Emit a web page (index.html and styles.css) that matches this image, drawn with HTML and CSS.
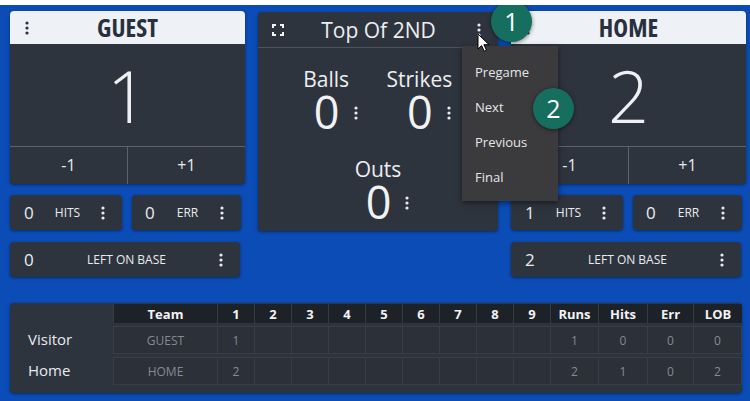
FILE: index.html
```html
<!DOCTYPE html>
<html>
<head>
<meta charset="utf-8">
<link rel="stylesheet" href="styles.css">
</head>
<body>
<div class="screen">
  <div class="top">
    <div class="side">
      <div class="card score-card">
        <div class="team-head">
          <svg class="kebab dark" viewBox="0 0 4 14"><circle cx="2" cy="2" r="1.6"/><circle cx="2" cy="7" r="1.6"/><circle cx="2" cy="12" r="1.6"/></svg>
          <span class="team-name">GUEST</span>
        </div>
        <div class="score">1</div>
        <div class="adjust"><div class="adj">-1</div><div class="adj">+1</div></div>
      </div>
      <div class="stats">
        <div class="card stat hits"><span class="num">0</span><span class="lbl">HITS</span><svg class="kebab" viewBox="0 0 4 14"><circle cx="2" cy="2" r="1.6"/><circle cx="2" cy="7" r="1.6"/><circle cx="2" cy="12" r="1.6"/></svg></div>
        <div class="card stat err"><span class="num">0</span><span class="lbl">ERR</span><svg class="kebab" viewBox="0 0 4 14"><circle cx="2" cy="2" r="1.6"/><circle cx="2" cy="7" r="1.6"/><circle cx="2" cy="12" r="1.6"/></svg></div>
      </div>
      <div class="card stat lob"><span class="num">0</span><span class="lbl">LEFT ON BASE</span><svg class="kebab" viewBox="0 0 4 14"><circle cx="2" cy="2" r="1.6"/><circle cx="2" cy="7" r="1.6"/><circle cx="2" cy="12" r="1.6"/></svg></div>
    </div>

    <div class="center">
      <div class="card game-card">
        <div class="game-head">
          <svg class="fs" viewBox="0 0 12 12"><path d="M1 4V1h3M8 1h3v3M11 8v3H8M4 11H1V8" fill="none" stroke="#f2f3f5" stroke-width="2"/></svg>
          <span class="inning">Top Of 2ND</span>
          <svg class="kebab" viewBox="0 0 4 14"><circle cx="2" cy="2" r="1.6"/><circle cx="2" cy="7" r="1.6"/><circle cx="2" cy="12" r="1.6"/></svg>
        </div>
        <div class="counts">
          <div class="count">
            <div class="count-lbl">Balls</div>
            <div class="count-row"><span class="count-num">0</span><svg class="kebab" viewBox="0 0 4 14"><circle cx="2" cy="2" r="1.6"/><circle cx="2" cy="7" r="1.6"/><circle cx="2" cy="12" r="1.6"/></svg></div>
          </div>
          <div class="count">
            <div class="count-lbl">Strikes</div>
            <div class="count-row"><span class="count-num">0</span><svg class="kebab" viewBox="0 0 4 14"><circle cx="2" cy="2" r="1.6"/><circle cx="2" cy="7" r="1.6"/><circle cx="2" cy="12" r="1.6"/></svg></div>
          </div>
        </div>
        <div class="counts outs">
          <div class="count">
            <div class="count-lbl">Outs</div>
            <div class="count-row"><span class="count-num">0</span><svg class="kebab" viewBox="0 0 4 14"><circle cx="2" cy="2" r="1.6"/><circle cx="2" cy="7" r="1.6"/><circle cx="2" cy="12" r="1.6"/></svg></div>
          </div>
        </div>
      </div>
      <div class="menu">
        <div class="menu-item">Pregame</div>
        <div class="menu-item">Next</div>
        <div class="menu-item">Previous</div>
        <div class="menu-item">Final</div>
      </div>
      <svg class="cursor" viewBox="0 0 12 19"><path d="M1 1v15l3.6-3.4 2.6 5.6 2.3-1-2.6-5.5H12z" fill="#fff" stroke="#000" stroke-width="1"/></svg>
      <div class="badge b1">1</div>
      <div class="badge b2">2</div>
    </div>

    <div class="side">
      <div class="card score-card">
        <div class="team-head">
          <svg class="kebab dark" viewBox="0 0 4 14"><circle cx="2" cy="2" r="1.6"/><circle cx="2" cy="7" r="1.6"/><circle cx="2" cy="12" r="1.6"/></svg>
          <span class="team-name">HOME</span>
        </div>
        <div class="score">2</div>
        <div class="adjust"><div class="adj">-1</div><div class="adj">+1</div></div>
      </div>
      <div class="stats">
        <div class="card stat hits"><span class="num">1</span><span class="lbl">HITS</span><svg class="kebab" viewBox="0 0 4 14"><circle cx="2" cy="2" r="1.6"/><circle cx="2" cy="7" r="1.6"/><circle cx="2" cy="12" r="1.6"/></svg></div>
        <div class="card stat err"><span class="num">0</span><span class="lbl">ERR</span><svg class="kebab" viewBox="0 0 4 14"><circle cx="2" cy="2" r="1.6"/><circle cx="2" cy="7" r="1.6"/><circle cx="2" cy="12" r="1.6"/></svg></div>
      </div>
      <div class="card stat lob"><span class="num">2</span><span class="lbl">LEFT ON BASE</span><svg class="kebab" viewBox="0 0 4 14"><circle cx="2" cy="2" r="1.6"/><circle cx="2" cy="7" r="1.6"/><circle cx="2" cy="12" r="1.6"/></svg></div>
    </div>
  </div>

  <div class="card box-card">
    <table class="box">
      <colgroup>
        <col class="c-label"><col class="c-team">
        <col class="c-inn"><col class="c-inn"><col class="c-inn"><col class="c-inn"><col class="c-inn"><col class="c-inn"><col class="c-inn"><col class="c-inn"><col class="c-inn">
        <col class="c-runs"><col class="c-hits"><col class="c-err"><col class="c-lob">
      </colgroup>
      <thead>
        <tr><th class="blank"></th><th>Team</th><th>1</th><th>2</th><th>3</th><th>4</th><th>5</th><th>6</th><th>7</th><th>8</th><th>9</th><th>Runs</th><th>Hits</th><th>Err</th><th>LOB</th></tr>
      </thead>
      <tbody>
        <tr><td class="rlabel">Visitor</td><td>GUEST</td><td>1</td><td></td><td></td><td></td><td></td><td></td><td></td><td></td><td></td><td>1</td><td>0</td><td>0</td><td>0</td></tr>
        <tr><td class="rlabel">Home</td><td>HOME</td><td>2</td><td></td><td></td><td></td><td></td><td></td><td></td><td></td><td></td><td>2</td><td>1</td><td>0</td><td>2</td></tr>
      </tbody>
    </table>
  </div>
</div>
</body>
</html>
```

FILE: styles.css
```css
* { box-sizing: border-box; }
html, body { margin: 0; padding: 0; background: #ffffff; }
body { font-family: "Open Sans", "Liberation Sans", sans-serif; color: #eceef1; }

.screen {
  margin-top: 5px;
  height: 396px;
  background: #0b4cb6;
  padding: 6px 0 0 10px;
  overflow: hidden;
}

.top { display: flex; gap: 13px; align-items: flex-start; }

.card {
  background: #2e343e;
  border-radius: 4px;
  box-shadow: 0 1px 3px rgba(0, 0, 0, 0.45);
}

.side { width: 235px; display: flex; flex-direction: column; }

.score-card { height: 173px; display: flex; flex-direction: column; overflow: hidden; }

.team-head {
  height: 33px;
  background: #eef1f5;
  display: flex;
  align-items: center;
  position: relative;
  padding-left: 15px;
}
.team-name {
  position: absolute;
  left: 0; right: 0; top: 0;
  text-align: center;
  line-height: 33px;
  font-size: 25px;
  font-weight: 700;
  font-stretch: 75%;
  color: #27303c;
}

.kebab { width: 4px; height: 14px; fill: #e9ebee; flex: none; }
.kebab.dark { fill: #2a323d; }

.score {
  height: 102px;
  line-height: 102px;
  text-align: center;
  font-size: 72px;
  font-weight: 300;
  color: #eef0f3;
}

.adjust { flex: 1; display: flex; border-top: 1px solid #5d636c; }
.adj {
  flex: 1;
  text-align: center;
  line-height: 37px;
  font-size: 16px;
  color: #e8eaed;
}
.adj + .adj { border-left: 1px solid #5d636c; }

.stats { display: flex; gap: 10px; margin-top: 11px; width: 231px; }

.stat {
  height: 35px;
  display: flex;
  align-items: center;
  padding: 0 17px 0 14px;
}
.stat.hits { width: 112px; }
.stat.err { width: 109px; padding-left: 13px; }
.stat.lob { width: 230px; margin-top: 12px; }
.num { font-size: 17px; width: 10px; color: #e9ebee; }
.lbl { flex: 1; text-align: center; font-size: 12px; color: #e9ebee; }

.center { width: 240px; position: relative; margin-top: 1px; }

.game-card { height: 219px; }

.game-head {
  height: 36px;
  display: flex;
  align-items: center;
  padding: 0 17px 0 14px;
  border-bottom: 1px solid #4d535c;
}
.fs { width: 12px; height: 12px; flex: none; }
.inning { flex: 1; text-align: center; font-size: 21px; color: #eceef1; padding-right: 4px; }

.counts {
  display: flex;
  justify-content: center;
  gap: 29px;
  padding: 20px 9px 0 0;
}
.counts.outs { padding: 26px 0 0 0; }

.count { display: flex; flex-direction: column; align-items: center; }
.count-lbl { font-size: 21px; line-height: 22px; color: #eceef1; }
.count-row { display: flex; align-items: center; padding-left: 19px; margin-top: 2px; }
.count-num { font-size: 45px; line-height: 40px; font-weight: 400; color: #f0f2f4; }
.count-row .kebab { margin-left: 14px; margin-top: 2px; }

.menu {
  position: absolute;
  left: 204px;
  top: 34px;
  width: 96px;
  padding: 9px 0 6px;
  background: #3b3b3d;
  box-shadow: 0 2px 6px rgba(0, 0, 0, 0.5);
  z-index: 5;
}
.menu-item {
  height: 35px;
  line-height: 35px;
  padding-left: 13px;
  font-size: 13px;
  color: #e6e6e8;
}

.cursor { position: absolute; left: 219px; top: 21px; width: 12px; height: 19px; z-index: 7; }

.badge {
  position: absolute;
  width: 41px;
  height: 41px;
  border-radius: 50%;
  background: #166e5f;
  color: #ffffff;
  font-size: 25px;
  line-height: 40px;
  text-align: center;
  box-shadow: 0 1px 4px rgba(0, 0, 0, 0.5);
  z-index: 8;
}
.b1 { left: 233px; top: -11px; }
.b2 { left: 275px; top: 76px; }

.box-card {
  margin-top: 26px;
  width: 732px;
  height: 90px;
  overflow: hidden;
}
.box {
  width: 732px;
  table-layout: fixed;
  border-collapse: separate;
  border-spacing: 0 3px;
  margin-top: -2px;
}
.c-label { width: 103px; }
.c-team { width: 104px; }
.c-inn { width: 37px; }
.c-runs { width: 48px; }
.c-hits { width: 49px; }
.c-err { width: 46px; }
.c-lob { width: 49px; }

.box th {
  height: 19px;
  padding: 0;
  background: #1d2128;
  color: #f2f3f5;
  font-size: 13px;
  font-weight: 700;
  border-left: 1px solid #353a43;
}
.box th.blank { background: transparent; border-left: none; }
.box td {
  height: 28px;
  padding: 0;
  text-align: center;
  font-size: 12px;
  color: #858b95;
  background: #2b3039;
  border: 1px solid #383e48;
  border-right: none;
}
.box td:last-child { border-right: 1px solid #383e48; }
.box td.rlabel {
  background: transparent;
  border: none;
  text-align: left;
  padding-left: 18px;
  padding-bottom: 3px;
  font-size: 15px;
  color: #e9ebee;
}
```
